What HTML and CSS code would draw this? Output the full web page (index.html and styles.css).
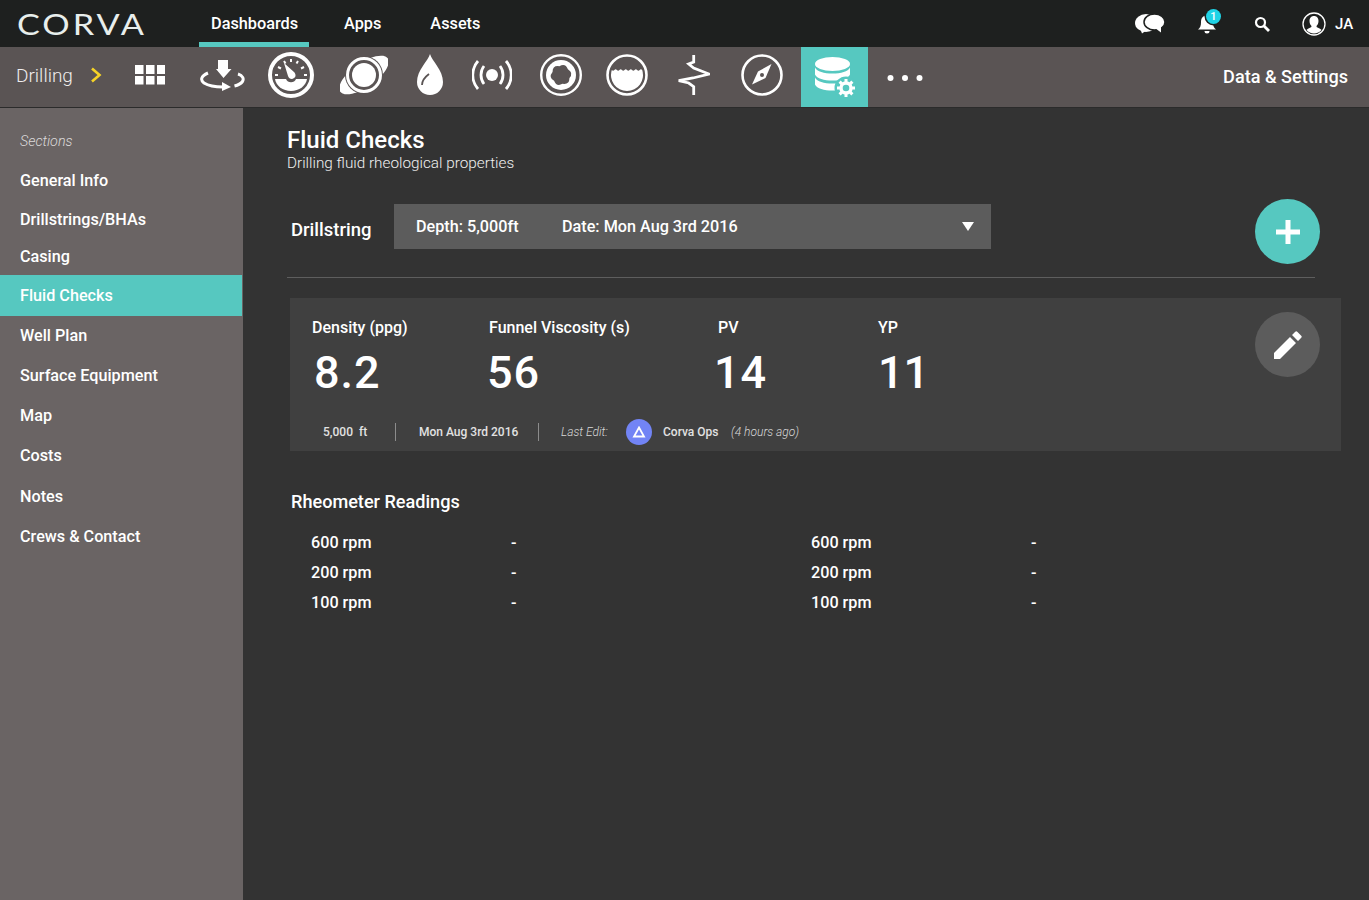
FILE: index.html
```html
<!DOCTYPE html>
<html lang="en">
<head>
  <meta charset="UTF-8">
  <title>Corva - Fluid Checks</title>
  <link rel="stylesheet" href="styles.css">
</head>
<body>
  <header class="topbar">
    <div class="logo"><span class="logo-text">CORVA</span></div>
    <nav class="topnav">
      <a class="topnav-item active">Dashboards</a>
      <a class="topnav-item">Apps</a>
      <a class="topnav-item">Assets</a>
    </nav>
    <div class="top-actions">
      <svg class="ic-chat" viewBox="0 0 30 20" width="30" height="20"><ellipse cx="11" cy="9" rx="11" ry="9" fill="#fff"/><path fill="#fff" d="M5 14l2 5.500 5-3.500z"/><ellipse cx="19.500" cy="8" rx="10.500" ry="8" fill="#fff" stroke="#1e201f" stroke-width="1.500"/><path fill="#fff" d="M20 14l6 4.500V11z"/></svg>
      <div class="bell">
        <svg viewBox="0 0 20 22" width="20" height="22"><path fill="#fff" d="M10 1c1 0 1.500.7 1.500 1.500C15 3.500 16 6 16 9.500c0 3.500 1 5.500 3 7H1c2-1.500 3-3.500 3-7C4 6 5 3.500 8.500 2.500 8.500 1.700 9 1 10 1z"/><path fill="#fff" d="M7.500 18h5a2.500 2.500 0 0 1-5 0z"/></svg>
        <span class="badge">1</span>
      </div>
      <svg class="ic-search" viewBox="0 0 16 16" width="16" height="16"><circle cx="6.500" cy="6.500" r="4.500" fill="none" stroke="#fff" stroke-width="2.200"/><path d="M10 10l5 5" stroke="#fff" stroke-width="2.800"/></svg>
      <svg class="ic-user" viewBox="0 0 24 24" width="24" height="24"><circle cx="12" cy="12" r="11" fill="none" stroke="#fff" stroke-width="1.300"/><path fill="#fff" d="M12 4c3 0 4.500 2.300 4.500 5 0 2-.8 4-2 5 0 1 .5 1.500 2 2 1.500.5 2.500 1.200 3 2-1.800 2.200-4.500 3.500-7.500 3.500S6.300 20.200 4.500 18c.5-.8 1.500-1.500 3-2 1.500-.5 2-1 2-2-1.200-1-2-3-2-5 0-2.700 1.500-5 4.500-5z"/></svg>
      <span class="initials">JA</span>
    </div>
  </header>

  <div class="subbar">
    <div class="crumb">
      <span class="crumb-label">Drilling</span>
      <svg viewBox="0 0 12 16" width="12" height="16"><path d="M2 1.500l7.500 6.500L2 14.500" fill="none" stroke="#f5d327" stroke-width="2.600"/></svg>
    </div>
    <div class="tools">
      <div class="tool">
        <svg viewBox="0 0 30 20" width="30" height="20" fill="#fff"><rect x="0" y="0" width="8.500" height="9"/><rect x="11" y="0" width="8.500" height="9"/><rect x="22" y="0" width="8" height="9"/><rect x="0" y="11" width="8.500" height="8.500"/><rect x="11" y="11" width="8.500" height="8.500"/><rect x="22" y="11" width="8" height="8.500"/></svg>
      </div>
      <div class="tool">
        <svg viewBox="0 0 45 31" width="45" height="31"><path fill="#fff" d="M18 0h10v9h3.500L23.500 18 16 9h2z"/><path fill="none" stroke="#fff" stroke-width="3" d="M8 13c-7 3-8 7-4 10 4 2.500 10 4 19 4"/><path fill="#fff" d="M22 22l9 5-9 4z"/><path fill="none" stroke="#fff" stroke-width="3" d="M38 14c5 1.500 6 5 4.500 7.500-1.500 2-4 3.500-8 4.500"/></svg>
      </div>
      <div class="tool">
        <svg viewBox="0 0 46 46" width="46" height="46"><circle cx="23" cy="23" r="21" fill="none" stroke="#fff" stroke-width="4"/><path fill="#fff" d="M7 27h11a5.500 5.500 0 0 0 10 0h11c-1 7-8 12-16 12S8 34 7 27z"/><path fill="#fff" d="M16 11l10 9c2 2 2 5 0 6-2 2-5 1-6-2z"/><g stroke="#fff" stroke-width="2"><path d="M7 23h3M36 23h3M10 15l3 1.500M36 15l-3 1.500M16 9l1.500 2.500M30 9l-1.500 2.500M23 7v3"/></g></svg>
      </div>
      <div class="tool">
        <svg viewBox="0 0 48 42" width="48" height="42"><ellipse cx="24" cy="21" rx="29" ry="12" transform="rotate(-35 24 21)" fill="#fff"/><circle cx="24" cy="21" r="19" fill="#5a5454"/><circle cx="24" cy="21" r="16.500" fill="none" stroke="#fff" stroke-width="3"/><circle cx="24" cy="21" r="12" fill="#fff"/></svg>
      </div>
      <div class="tool">
        <svg viewBox="0 0 26 42" width="26" height="42"><path fill="#fff" d="M13 0c2 7 13 16 13 28a13 13 0 0 1-26 0C0 16 11 7 13 0z"/><path fill="none" stroke="#5a5454" stroke-width="1.800" d="M5 31c0-5 3-8 7-11"/></svg>
      </div>
      <div class="tool">
        <svg viewBox="0 0 40 32" width="40" height="32"><circle cx="20" cy="16" r="6" fill="#fff"/><g fill="none" stroke="#fff" stroke-width="2.800"><path d="M12 7c-4 5-4 13 0 18M28 7c4 5 4 13 0 18"/><path d="M6 2c-7 8-7 20 0 28M34 2c7 8 7 20 0 28"/></g></svg>
      </div>
      <div class="tool">
        <svg viewBox="0 0 42 42" width="42" height="42"><circle cx="21" cy="21" r="19.800" fill="none" stroke="#fff" stroke-width="2.400"/><circle cx="21" cy="21" r="15" fill="#fff"/><path fill="#5a5454" transform="rotate(20 21 21)" d="M30 21Q32.300 27.500 25.500 28.800Q21 34 16.500 28.800Q9.700 27.500 12 21Q9.700 14.500 16.500 13.200Q21 8 25.500 13.200Q32.300 14.500 30 21z"/></svg>
      </div>
      <div class="tool">
        <svg viewBox="0 0 42 42" width="42" height="42"><circle cx="21" cy="21" r="19.500" fill="none" stroke="#fff" stroke-width="2.600"/><path fill="#fff" d="M5.800 16A16 16 0 1 0 36.200 16q-1.270-1.500-2.530 0t-2.530 0-2.530 0-2.530 0-2.530 0-2.530 0-2.530 0-2.530 0-2.530 0-2.530 0-2.530 0-2.530 0z"/></svg>
      </div>
      <div class="tool">
        <svg viewBox="0 0 32 42" width="32" height="42"><path fill="none" stroke="#fff" stroke-width="2.800" d="M15.700 1v7l-5 2 5 4 15.300 6-16 4-14.300 2.700 10 2.300 5 3.700V41"/></svg>
      </div>
      <div class="tool tool-compass">
        <svg viewBox="0 0 42 42" width="42" height="42"><circle cx="21" cy="21" r="19.500" fill="none" stroke="#fff" stroke-width="2.600"/><path fill="#fff" d="M30.500 10L24.500 24 11 30.500 17 17.500z"/><circle cx="21" cy="21" r="2" fill="#5a5454"/></svg>
      </div>
      <div class="tool tool-active">
        <svg viewBox="0 0 40 40" width="40" height="40"><ellipse cx="17.500" cy="7" rx="17.500" ry="7" fill="#fff"/><path fill="#fff" d="M0 10.500c2 4 9 6 17.500 6s15.500-2 17.500-6v7c-2 4-9 6-17.500 6S2 21.500 0 17.500zM0 20.500c2 4 9 6 17.500 6s15.500-2 17.500-6v7c-2 4-9 6-17.500 6S2 31.500 0 27.500z"/><circle cx="31" cy="31" r="11.500" fill="#56c8c0"/><circle cx="31" cy="31" r="5" fill="none" stroke="#fff" stroke-width="3.400"/><g stroke="#fff" stroke-width="3"><path d="M31 22v4M31 36v4M22 31h4M36 31h4M24.600 24.600l2.800 2.800M34.600 34.600l2.800 2.800M37.400 24.600l-2.800 2.800M27.400 34.600l-2.800 2.800"/></g></svg>
      </div>
      <div class="tool tool-more">
        <svg viewBox="0 0 36 8" width="36" height="8" fill="#fff"><circle cx="3.500" cy="4" r="3"/><circle cx="18" cy="4" r="3"/><circle cx="32.500" cy="4" r="3"/></svg>
      </div>
    </div>
    <div class="data-settings">Data &amp; Settings</div>
  </div>

  <div class="layout">
    <aside class="sidebar">
      <div class="sidebar-title">Sections</div>
      <a class="side-item">General Info</a>
      <a class="side-item side-drill">Drillstrings/BHAs</a>
      <a class="side-item side-casing">Casing</a>
      <a class="side-item active">Fluid Checks</a>
      <a class="side-item side-well">Well Plan</a>
      <a class="side-item">Surface Equipment</a>
      <a class="side-item">Map</a>
      <a class="side-item">Costs</a>
      <a class="side-item side-notes">Notes</a>
      <a class="side-item">Crews &amp; Contact</a>
    </aside>

    <main class="content">
      <h1>Fluid Checks</h1>
      <p class="subtitle">Drilling fluid rheological properties</p>

      <div class="picker-row">
        <label class="picker-label">Drillstring</label>
        <div class="picker">
          <span class="picker-depth">Depth: 5,000ft</span>
          <span>Date: Mon Aug 3rd 2016</span>
          <span class="caret"></span>
        </div>
        <button class="add-btn">
          <svg viewBox="0 0 24 24" width="24" height="24"><path fill="#fff" d="M9.500 0h5v9.500H24v5h-9.500V24h-5v-9.500H0v-5h9.500z"/></svg>
        </button>
      </div>

      <div class="card">
        <div class="metrics">
          <div class="metric m-density"><div class="metric-label">Density (ppg)</div><div class="metric-value">8.2</div></div>
          <div class="metric m-funnel"><div class="metric-label">Funnel Viscosity (s)</div><div class="metric-value">56</div></div>
          <div class="metric m-pv"><div class="metric-label">PV</div><div class="metric-value">14</div></div>
          <div class="metric m-yp"><div class="metric-label">YP</div><div class="metric-value">11</div></div>
        </div>
        <div class="card-meta">
          <span class="meta-depth">5,000&nbsp; ft</span>
          <span class="meta-date">Mon Aug 3rd 2016</span>
          <em class="meta-edit">Last Edit:</em>
          <span class="avatar">
            <svg viewBox="0 0 14 12" width="14" height="12"><path d="M7 1.500L12 10.500H2z" fill="none" stroke="#fff" stroke-width="1.800"/></svg>
          </span>
          <span class="meta-name">Corva Ops</span>
          <em class="meta-ago">(4 hours ago)</em>
        </div>
        <button class="edit-btn">
          <svg viewBox="0 0 28 28" width="28" height="28"><path fill="#fff" d="M0 28v-6L16 6l6 6L6 28zM18 4l3-3c1-1 1.500-1 2.500 0l3.500 3.500c1 1 1 1.500 0 2.500l-3 3z"/></svg>
        </button>
      </div>

      <h2>Rheometer Readings</h2>
      <div class="readings">
        <div class="reading"><span>600 rpm</span><span>-</span></div>
        <div class="reading"><span>600 rpm</span><span>-</span></div>
        <div class="reading"><span>200 rpm</span><span>-</span></div>
        <div class="reading"><span>200 rpm</span><span>-</span></div>
        <div class="reading"><span>100 rpm</span><span>-</span></div>
        <div class="reading"><span>100 rpm</span><span>-</span></div>
      </div>
    </main>
  </div>
</body>
</html>
```

FILE: styles.css
```css
* {
  box-sizing: border-box;
}
html, body {
  margin: 0;
  height: 100%;
}
body {
  font-family: Roboto, "Noto Sans", sans-serif;
  font-weight: 500;
  color: #fff;
  background-color: #333;
  display: flex;
  flex-direction: column;
  height: 900px;
  overflow: hidden;
}

/* top bar */
.topbar {
  height: 47px;
  background-color: #1e201f;
  display: flex;
  align-items: center;
  flex-shrink: 0;
}
.logo {
  width: 199px;
  padding-left: 17px;
}
.logo-text {
  display: inline-block;
  font-family: "Lato", sans-serif;
  font-weight: 400;
  font-size: 29px;
  letter-spacing: 2.5px;
  color: #e8eeec;
  transform: scaleX(1.18);
  transform-origin: left center;
}
.topnav {
  display: flex;
  align-self: stretch;
}
.topnav-item {
  font-size: 16.3px;
  line-height: 48px;
  height: 47px;
  margin-right: 49px;
}
.topnav-item.active {
  width: 110px;
  padding-left: 12px;
  border-bottom: 5px solid #56c8c0;
  margin-right: 35px;
}
.top-actions {
  margin-left: auto;
  display: flex;
  align-items: center;
  padding-right: 17px;
}
.ic-chat {
  margin-right: 32px;
}
.bell {
  position: relative;
  width: 20px;
  height: 22px;
  margin-right: 37px;
}
.badge {
  position: absolute;
  top: -4px;
  left: 9px;
  width: 15px;
  height: 15px;
  border-radius: 50%;
  background-color: #1fd3e6;
  box-shadow: 0 0 0 1.5px #1e201f;
  font-size: 11px;
  line-height: 15px;
  text-align: center;
}
.ic-search {
  margin-right: 32px;
}
.ic-user {
  margin-right: 9px;
}
.initials {
  font-size: 15px;
  width: 17px;
}

/* tool bar */
.subbar {
  height: 61px;
  background-color: #5a5454;
  border-bottom: 1px solid #2b2b2b;
  display: flex;
  flex-shrink: 0;
}
.crumb {
  width: 116px;
  padding: 0 0 4px 16px;
  display: flex;
  align-items: center;
  gap: 17px;
}
.crumb-label {
  font-size: 19px;
  font-weight: 300;
  color: #f0eeee;
}
.tools {
  display: grid;
  grid-template-columns: 68px 76px 62px 84px 48px 76px 62px 70px 64px 75px 67px 74px;
}
.tool {
  display: flex;
  align-items: center;
  justify-content: center;
  padding-bottom: 4px;
}
.tool-compass {
  padding-right: 3px;
}
.tool-active {
  background-color: #56c8c0;
  padding-bottom: 0;
}
.tool-more {
  padding: 2px 0 0;
}
.data-settings {
  margin-left: auto;
  padding-right: 21px;
  font-size: 18.1px;
  line-height: 60px;
}

/* sidebar */
.layout {
  flex: 1;
  display: flex;
  min-height: 0;
}
.sidebar {
  width: 243px;
  background-color: #6a6464;
  padding-top: 23px;
  flex-shrink: 0;
}
.sidebar-title {
  font-size: 14.3px;
  font-style: italic;
  font-weight: 300;
  color: #dcdada;
  padding-left: 20px;
  height: 28px;
  line-height: 20px;
}
.side-item {
  display: block;
  height: 40px;
  line-height: 44px;
  padding-left: 20px;
  font-size: 16.2px;
}
.side-drill {
  height: 39px;
  line-height: 41px;
}
.side-casing {
  height: 37px;
  line-height: 37px;
}
.side-well {
  height: 38px;
  line-height: 40px;
}
.side-notes {
  height: 41px;
  line-height: 45px;
}
.side-item.active {
  height: 41px;
  line-height: 42px;
  margin-right: 1px;
  background-color: #56c8c0;
}

/* main */
.content {
  flex: 1;
  padding: 18px 28px 0 44px;
}
h1 {
  margin: 0;
  font-size: 24px;
  font-weight: 500;
  line-height: 28px;
}
.subtitle {
  margin: 1px 0 0;
  font-size: 15.3px;
  font-weight: 300;
  line-height: 16px;
  color: #f0f0f0;
}
.picker-row {
  display: flex;
  align-items: center;
  margin-top: 28px;
  padding-bottom: 13px;
  border-bottom: 1px solid #5e5e5e;
  width: 1028px;
}
.picker-label {
  font-size: 18.5px;
  width: 107px;
  padding-left: 4px;
  margin-bottom: 3px;
  flex-shrink: 0;
}
.picker {
  width: 597px;
  height: 45px;
  margin-bottom: 10px;
  background-color: #5c5c5c;
  display: flex;
  align-items: center;
  padding: 0 17px 0 22px;
  font-size: 16.2px;
  flex-shrink: 0;
}
.picker-depth {
  width: 146px;
}
.caret {
  margin-left: auto;
  border-left: 6px solid transparent;
  border-right: 6px solid transparent;
  border-top: 9px solid #fff;
}
.add-btn {
  width: 65px;
  height: 65px;
  margin-left: 264px;
  border: none;
  border-radius: 50%;
  background-color: #56c8c0;
  display: flex;
  align-items: center;
  justify-content: center;
  padding: 0;
  flex-shrink: 0;
}
.card {
  position: relative;
  margin: 20px 0 0 3px;
  width: 1051px;
  height: 153px;
  background-color: #404040;
}
.metrics {
  display: flex;
  padding-top: 18px;
}
.metric-label {
  font-size: 16px;
  line-height: 24px;
}
.metric-value {
  font-size: 45px;
  font-weight: 500;
  line-height: 66px;
  letter-spacing: 1px;
}
.m-density {
  width: 177px;
  padding-left: 22px;
}
.m-density .metric-value {
  margin-left: 2px;
}
.m-funnel {
  width: 229px;
  padding-left: 22px;
}
.m-funnel .metric-value {
  margin-left: -2px;
}
.m-pv {
  width: 182px;
  padding-left: 22px;
}
.m-pv .metric-value {
  margin-left: -4px;
}
.m-yp {
  width: 160px;
}
.m-yp .metric-value {
  letter-spacing: 0;
}
.card-meta {
  display: flex;
  align-items: center;
  font-size: 12px;
  font-weight: 500;
  color: #e2e2e2;
  padding: 13px 0 0 33px;
}
.meta-depth {
  width: 73px;
  border-right: 1px solid #8c8c8c;
  line-height: 18px;
}
.meta-date {
  width: 143px;
  padding-left: 23px;
  border-right: 1px solid #8c8c8c;
  line-height: 18px;
}
em {
  font-weight: 300;
  color: #d8d8d8;
}
.meta-edit {
  margin-left: 22px;
  width: 65px;
}
.avatar {
  width: 26px;
  height: 26px;
  border-radius: 50%;
  background-color: #7284f5;
  display: flex;
  align-items: center;
  justify-content: center;
}
.meta-name {
  margin-left: 11px;
  width: 68px;
}
.edit-btn {
  position: absolute;
  top: 14px;
  right: 21px;
  width: 65px;
  height: 65px;
  border: none;
  border-radius: 50%;
  background-color: #5c5c5c;
  display: flex;
  align-items: center;
  justify-content: center;
  padding: 0;
}
h2 {
  margin: 37px 0 0 4px;
  font-size: 18.1px;
  font-weight: 500;
  line-height: 28px;
}
.readings {
  display: grid;
  grid-template-columns: 500px 500px;
  margin: 12px 0 0 24px;
}
.reading {
  display: flex;
  height: 30px;
  line-height: 30px;
  font-size: 16.2px;
}
.reading span:first-child {
  width: 200px;
}
.reading:nth-child(even) span:first-child {
  width: 220px;
}
```
